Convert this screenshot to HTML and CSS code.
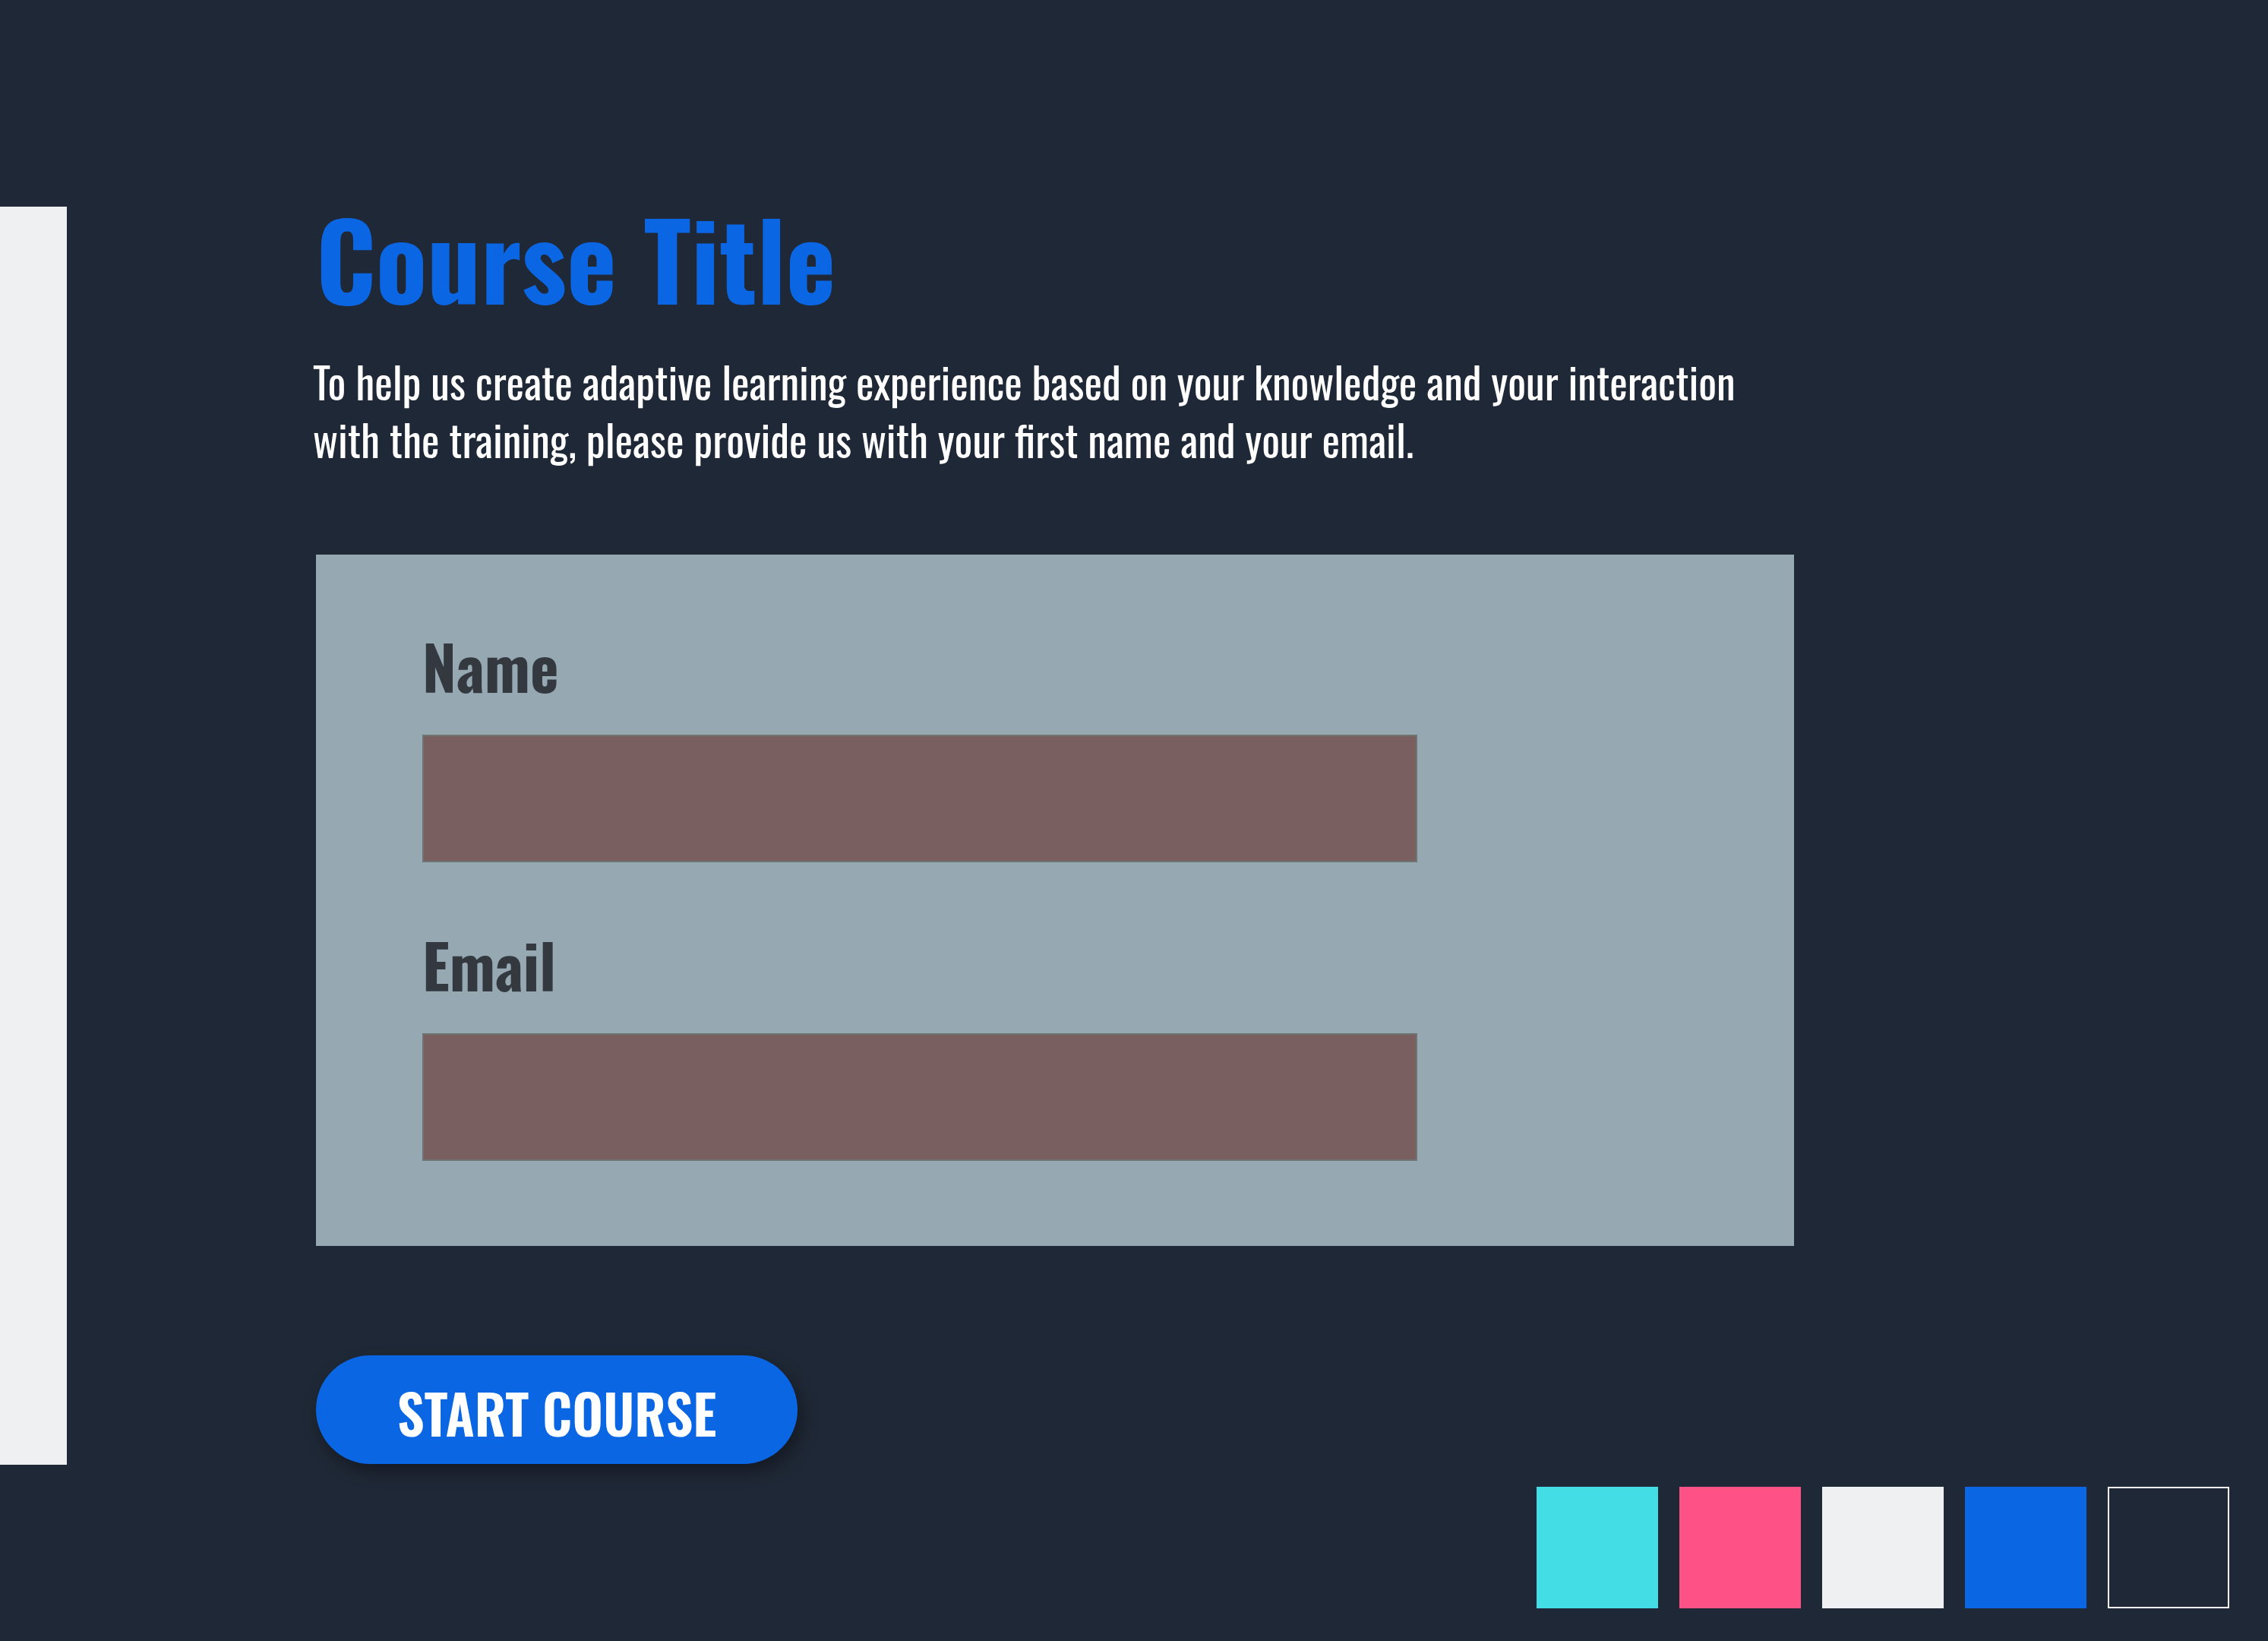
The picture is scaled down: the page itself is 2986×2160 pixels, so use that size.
FILE: index.html
```html
<!DOCTYPE html>
<html lang="en">
<head>
<meta charset="utf-8">
<title>Course Title</title>
<link rel="stylesheet" href="styles.css">
</head>
<body>
<div class="page">
  <aside class="sidebar"></aside>
  <main class="main">
    <h1 class="title">Course Title</h1>
    <p class="intro">To help us create adaptive learning experience based on your knowledge and your interaction with the training, please provide us with your first name and your email.</p>
    <form class="panel">
      <div class="field">
        <label class="label" for="name">Name</label>
        <input class="input" id="name" type="text">
      </div>
      <div class="field">
        <label class="label" for="email">Email</label>
        <input class="input" id="email" type="email">
      </div>
    </form>
    <button class="start" type="button">START COURSE</button>
    <div class="swatches">
      <span class="swatch swatch-cyan"></span>
      <span class="swatch swatch-pink"></span>
      <span class="swatch swatch-light"></span>
      <span class="swatch swatch-blue"></span>
      <span class="swatch swatch-dark"></span>
    </div>
  </main>
</div>
</body>
</html>
```
FILE: styles.css
```css
html, body {
  margin: 0;
  padding: 0;
}
body {
  background: #1f2836;
  width: 2986px;
  height: 2160px;
  overflow: hidden;
  font-family: Oswald, "Open Sans", Roboto, sans-serif;
}
.page {
  display: flex;
  align-items: flex-start;
  height: 2160px;
}
.sidebar {
  flex: 0 0 88px;
  height: 1656px;
  margin-top: 272px;
  background: #eff0f2;
}
.main {
  flex: 1;
  margin-left: 328px;
  padding-right: 51px;
  display: flex;
  flex-direction: column;
  align-items: flex-start;
}
.title {
  margin: 268px 0 0 0;
  font-size: 140px;
  line-height: 140px;
  font-weight: 700;
  color: #0b66e4;
}
.intro {
  margin: 56px 0 0 -4px;
  width: 1900px;
  font-size: 56px;
  line-height: 76px;
  font-weight: 400;
  color: #ffffff;
}
.panel {
  box-sizing: border-box;
  margin-top: 114px;
  width: 1946px;
  padding: 106px 0 112px 140px;
  background: #96a9b3;
  display: flex;
  flex-direction: column;
  gap: 94px;
}
.field {
  display: flex;
  flex-direction: column;
  gap: 51px;
}
.label {
  font-size: 80px;
  line-height: 80px;
  font-weight: 700;
  color: #33393e;
}
.input {
  box-sizing: border-box;
  width: 1310px;
  height: 168px;
  margin: 0;
  border: 2px solid #6e7472;
  background: #7a5f60;
  outline: none;
}
.start {
  margin-top: 144px;
  width: 634px;
  height: 143px;
  border: none;
  border-radius: 72px;
  background: #0b66e4;
  color: #ffffff;
  font-family: Oswald, "Open Sans", Roboto, sans-serif;
  font-size: 71px;
  line-height: 71px;
  font-weight: 600;
  padding: 8px 0 0 0;
  box-shadow: 6px 10px 22px rgba(0, 0, 0, 0.35);
  cursor: pointer;
}
.swatches {
  align-self: stretch;
  display: flex;
  justify-content: flex-end;
  gap: 28px;
  margin-top: 30px;
}
.swatch {
  box-sizing: border-box;
  width: 160px;
  height: 160px;
}
.swatch-cyan { background: #43dde6; }
.swatch-pink { background: #fe5286; }
.swatch-light { background: #eff0f2; }
.swatch-blue { background: #0b66e4; }
.swatch-dark { background: #1f2836; border: 2px solid #ffffff; }
```
